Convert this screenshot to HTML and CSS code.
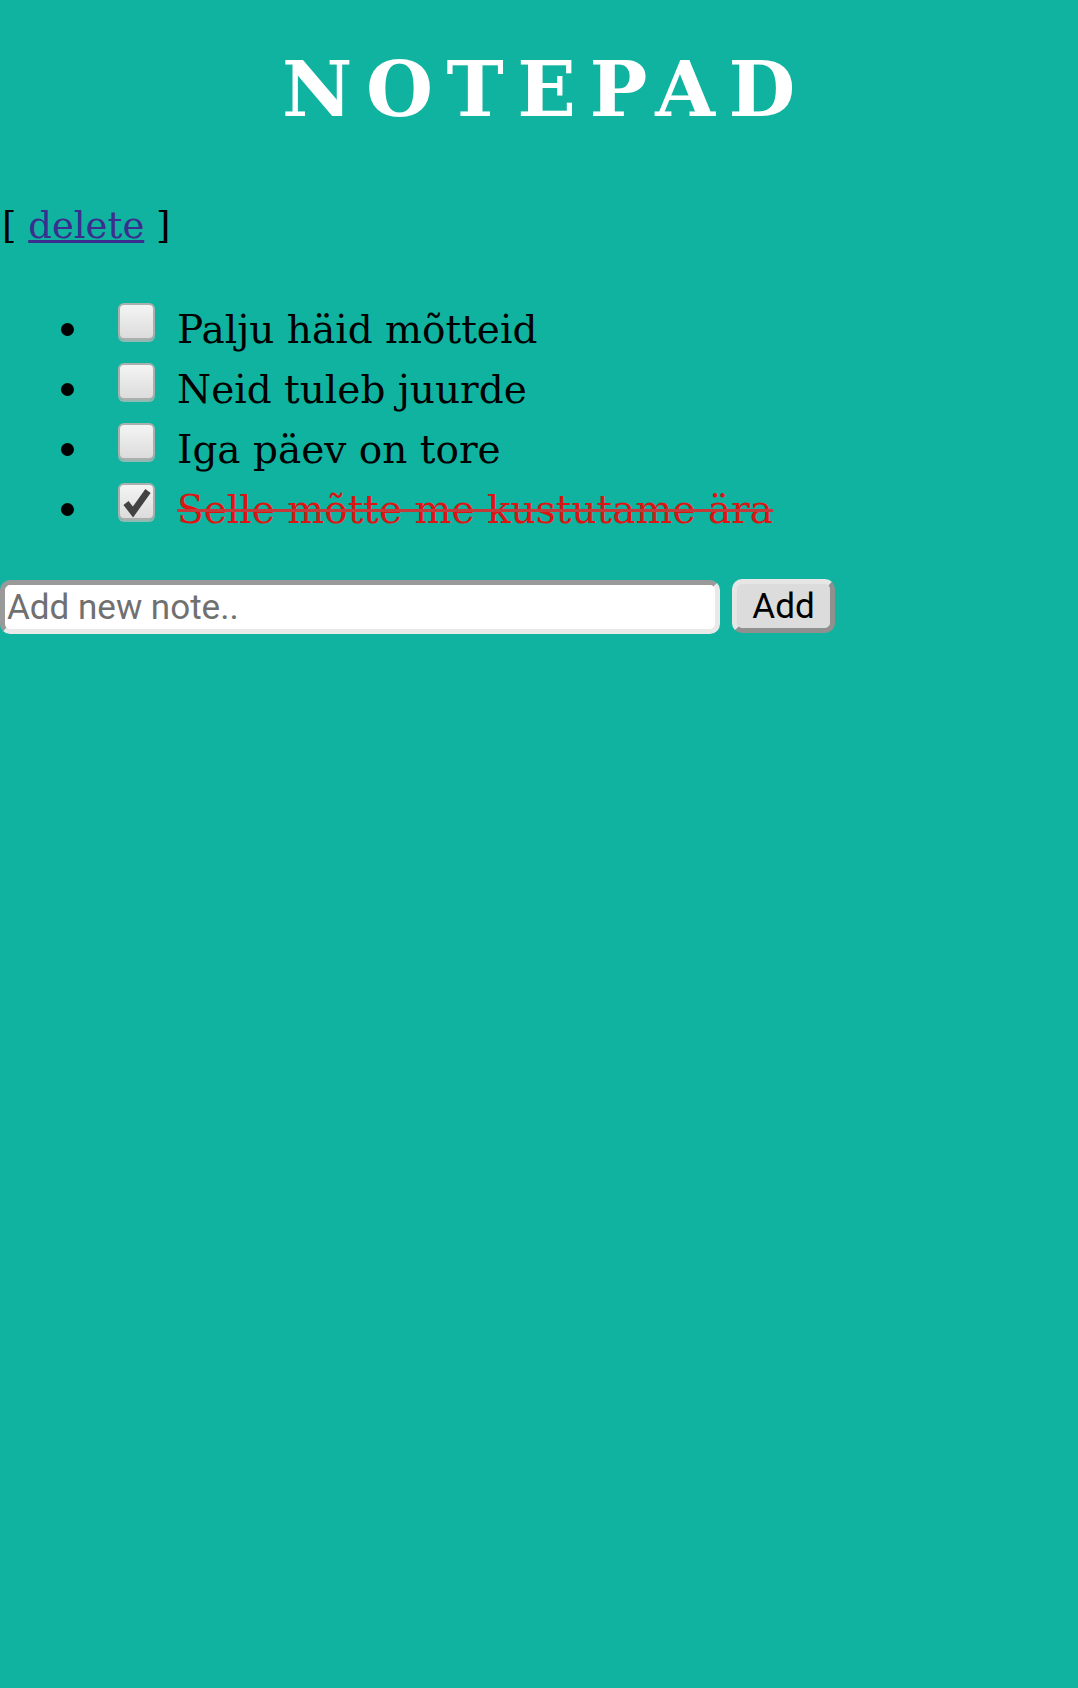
FILE: index.html
```html
<!DOCTYPE html>
<html>
<head>
<meta charset="utf-8">
<title>Notepad</title>
<link rel="stylesheet" href="styles.css">
</head>
<body>
<h1 class="title">NOTEPAD</h1>
<div class="actions">[ <a href="#" class="delete-link">delete</a> ]</div>
<ul class="notes">
  <li class="note"><span class="check"></span>Palju häid mõtteid</li>
  <li class="note"><span class="check"></span>Neid tuleb juurde</li>
  <li class="note"><span class="check"></span>Iga päev on tore</li>
  <li class="note"><span class="check"><svg class="tick" viewBox="0 0 37 37" width="37" height="37"><polyline points="8,20 15,29 30,8" fill="none" stroke="#424242" stroke-width="6.5" stroke-linejoin="miter" stroke-linecap="butt"/></svg></span><span class="done-text">Selle mõtte me kustutame ära</span></li>
</ul>
<form class="add-form">
  <input class="note-input" type="text" placeholder="Add new note..">
  <button class="add-btn" type="button">Add</button>
</form>
</body>
</html>
```
FILE: styles.css
```css
html, body {
  margin: 0;
  padding: 0;
  background: #10b3a0;
  min-height: 100%;
}
body {
  font-family: "DejaVu Serif", "Liberation Serif", serif;
  font-size: 39px;
  color: #000;
}
.title {
  margin: 0;
  padding: 44px 0 0 13px;
  height: 98px;
  text-align: center;
  font-size: 77px;
  line-height: 90px;
  font-weight: bold;
  letter-spacing: 13.5px;
  color: #fff;
}
.actions {
  margin-top: 59px;
  padding-left: 2px;
  font-size: 37px;
  line-height: 50px;
}
.delete-link {
  color: #3b2e8e;
  text-decoration: underline;
}
.notes {
  margin: 49px 0 0 0;
  padding: 0;
  list-style: none;
}
.note {
  line-height: 60px;
  height: 60px;
}
.note::before {
  content: "";
  display: inline-block;
  width: 13px;
  height: 13px;
  margin-left: 61px;
  vertical-align: 7px;
  border-radius: 50%;
  background: #000;
}
.check {
  display: inline-block;
  box-sizing: border-box;
  width: 37px;
  height: 37px;
  margin: 0 22px 0 44px;
  vertical-align: 3px;
  border: 2px solid #a9b0ae;
  border-radius: 6px;
  background: linear-gradient(#f4f4f4, #dcdcdc);
  box-shadow: 0 2px 0 #8fb9b2;
  overflow: visible;
}
.tick {
  display: block;
  margin: -2px 0 0 -2px;
}
.done-text {
  color: #dc1414;
  text-decoration: line-through;
  text-decoration-color: #c43a3a;
}
.add-form {
  display: flex;
  align-items: flex-start;
  gap: 12px;
  margin-top: 40px;
}
.note-input {
  box-sizing: border-box;
  width: 720px;
  height: 54px;
  margin: 0;
  padding: 0 0 0 2px;
  border: 5px solid;
  border-color: #9a9a9a #e9e9e9 #e9e9e9 #9a9a9a;
  border-radius: 10px;
  background: #fff;
  font-family: Roboto, "Noto Sans", sans-serif;
  font-size: 35px;
  color: #222;
  outline: none;
}
.note-input::placeholder {
  color: #707070;
}
.add-btn {
  box-sizing: border-box;
  width: 103px;
  height: 54px;
  margin: -1px 0 0 0;
  padding: 0;
  border: 5px solid;
  border-color: #e6e6e6 #909090 #909090 #e6e6e6;
  border-radius: 10px;
  background: #dcdcdc;
  font-family: Roboto, "Noto Sans", sans-serif;
  font-size: 35px;
  color: #000;
}
```
